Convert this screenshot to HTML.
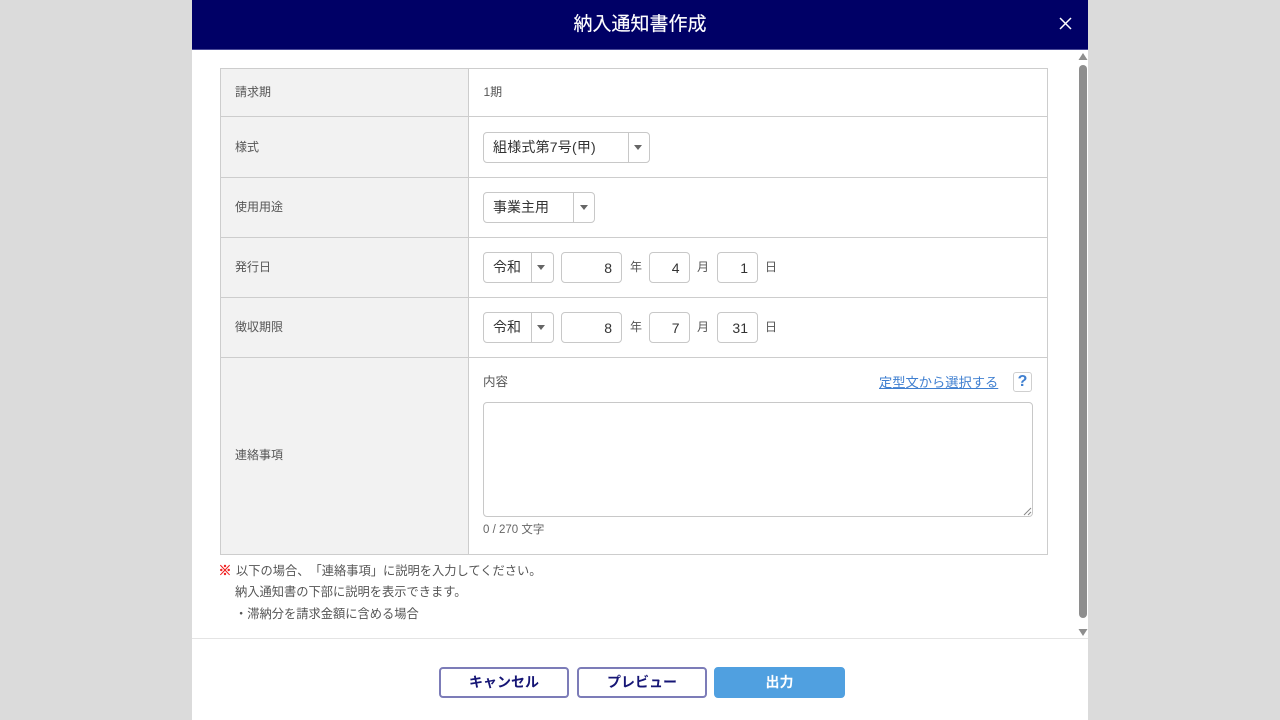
<!DOCTYPE html>
<html lang="ja"><head><meta charset="utf-8"><title>納入通知書作成</title>
<style>
*{box-sizing:border-box}
html,body{margin:0;padding:0;width:1280px;height:720px;overflow:hidden;background:#dbdbdb}
body{font-family:"Liberation Sans","Noto Sans CJK JP",sans-serif;color:#555;text-spacing-trim:space-all}
.a{position:absolute}
#m{left:192px;top:0;width:896px;height:720px;background:#fff;overflow:hidden}
#h{left:0;top:0;width:896px;height:50px;background:#000066;border-bottom:1px solid #4a4a99;color:#fff;font-size:19px;line-height:49px;text-align:center;-webkit-text-stroke:.15px #fff}
.t{white-space:nowrap;font-size:12px;line-height:16px}
.n{font-size:12.25px}
.line{background:#cdcdcd;height:1px}
.box{background:#fff;border:1px solid #c8c8c8;border-radius:4px;height:31px;color:#333;font-size:14px;line-height:29px;white-space:nowrap}
.sel i{position:absolute;top:0;bottom:0;width:1px;background:#c8c8c8}
.sel b{position:absolute;top:12px;width:0;height:0;border-left:4.5px solid transparent;border-right:4.5px solid transparent;border-top:5px solid #666}
.sel span{position:absolute;left:9px;top:0}
.num{text-align:right;padding-right:9px;font-size:14px;line-height:30px}
.btn{top:667px;width:130px;height:31px;border:2px solid #7c7cb8;border-radius:4px;background:#fff;color:#151575;font-size:14px;font-weight:700;line-height:27px;text-align:center}
</style></head><body>
<div id="m" class="a">
<div id="h" class="a">納入通知書作成</div>
<svg class="a" style="left:866px;top:16px" width="15" height="15" viewBox="0 0 15 15"><path d="M2 2L13 13M13 2L2 13" stroke="#fff" stroke-width="1.5" fill="none"/></svg>

<div class="a" style="left:28px;top:69px;width:248px;height:485px;background:#f2f2f2"></div>
<div class="a" style="left:276px;top:69px;width:1px;height:485px;background:#cdcdcd"></div>
<div class="a" style="left:28px;top:68px;width:1px;height:487px;background:#cdcdcd"></div>
<div class="a" style="left:855px;top:68px;width:1px;height:487px;background:#cdcdcd"></div>
<div class="a line" style="left:28px;top:68px;width:828px"></div>
<div class="a line" style="left:28px;top:116px;width:828px"></div>
<div class="a line" style="left:28px;top:177px;width:828px"></div>
<div class="a line" style="left:28px;top:237px;width:828px"></div>
<div class="a line" style="left:28px;top:297px;width:828px"></div>
<div class="a line" style="left:28px;top:357px;width:828px"></div>
<div class="a line" style="left:28px;top:554px;width:828px"></div>

<div class="a t" style="left:43px;top:84px">請求期</div>
<div class="a t" style="left:43px;top:139px">様式</div>
<div class="a t" style="left:43px;top:199px">使用用途</div>
<div class="a t" style="left:43px;top:259px">発行日</div>
<div class="a t" style="left:43px;top:319px">徴収期限</div>
<div class="a t" style="left:43px;top:447px">連絡事項</div>
<div class="a t" style="left:291.5px;top:84px">1期</div>

<div class="a box sel" style="left:291px;top:132px;width:167px"><span style="letter-spacing:.2px">組様式第7号(甲)</span><i style="left:144px"></i><b style="left:150px"></b></div>
<div class="a box sel" style="left:291px;top:192px;width:112px"><span>事業主用</span><i style="left:89px"></i><b style="left:96px"></b></div>

<div class="a box sel" style="left:291px;top:252px;width:71px"><span>令和</span><i style="left:47px"></i><b style="left:53px"></b></div>
<div class="a box num" style="left:369px;top:252px;width:61px">8</div>
<div class="a t" style="left:438px;top:259px">年</div>
<div class="a box num" style="left:457px;top:252px;width:40.5px">4</div>
<div class="a t" style="left:505px;top:259px">月</div>
<div class="a box num" style="left:525px;top:252px;width:41px">1</div>
<div class="a t" style="left:573px;top:259px">日</div>

<div class="a box sel" style="left:291px;top:312px;width:71px"><span>令和</span><i style="left:47px"></i><b style="left:53px"></b></div>
<div class="a box num" style="left:369px;top:312px;width:61px">8</div>
<div class="a t" style="left:438px;top:319px">年</div>
<div class="a box num" style="left:457px;top:312px;width:40.5px">7</div>
<div class="a t" style="left:505px;top:319px">月</div>
<div class="a box num" style="left:525px;top:312px;width:41px">31</div>
<div class="a t" style="left:573px;top:319px">日</div>

<div class="a t" style="left:291px;top:374px;font-size:12.5px">内容</div>
<div class="a t" style="left:687px;top:375px;font-size:13.25px;color:#3f7fd0;text-decoration:underline">定型文から選択する</div>
<div class="a" style="left:821px;top:372px;width:19px;height:20px;border:1px solid #cfcfcf;border-radius:3px;color:#3f7fd0;font-size:16px;font-weight:700;line-height:18px;text-align:center">?</div>
<div class="a" style="left:291px;top:402px;width:549.5px;height:115px;border:1px solid #c8c8c8;border-radius:4px;background:#fff"></div>
<svg class="a" style="left:831px;top:507px" width="9" height="9" viewBox="0 0 9 9"><path d="M1 8L8 1M5 8L8 5" stroke="#888" stroke-width="1" fill="none"/></svg>
<div class="a t" style="left:291px;top:522px;font-size:11.5px;color:#666">0 / 270 文字</div>

<div class="a t" style="left:26.5px;top:563px;color:#f02020;font-size:13px;font-weight:700;-webkit-text-stroke:.5px #f02020">※</div>
<div class="a t n" style="left:44px;top:563px">以下の場合、「連絡事項」に説明を入力してください。</div>
<div class="a t n" style="left:43px;top:584px">納入通知書の下部に説明を表示できます。</div>
<div class="a t n" style="left:43px;top:606px">・滞納分を請求金額に含める場合</div>

<div class="a" style="left:0;top:638px;width:896px;height:1px;background:#e4e4e4"></div>
<div class="a btn" style="left:247px">キャンセル</div>
<div class="a btn" style="left:385px">プレビュー</div>
<div class="a btn" style="left:522px;width:131px;background:#50a0e0;border-color:#50a0e0;color:#fff">出力</div>

<svg class="a" style="left:886px;top:53px" width="10" height="8" viewBox="0 0 10 8"><path d="M5 0L9.5 7H.5Z" fill="#8e8e8e"/></svg>
<div class="a" style="left:887px;top:65px;width:8px;height:553px;background:#8e8e8e;border-radius:4px"></div>
<svg class="a" style="left:886px;top:628px" width="10" height="8" viewBox="0 0 10 8"><path d="M.5 1H9.5L5 8Z" fill="#8e8e8e"/></svg>
</div>
</body></html>
